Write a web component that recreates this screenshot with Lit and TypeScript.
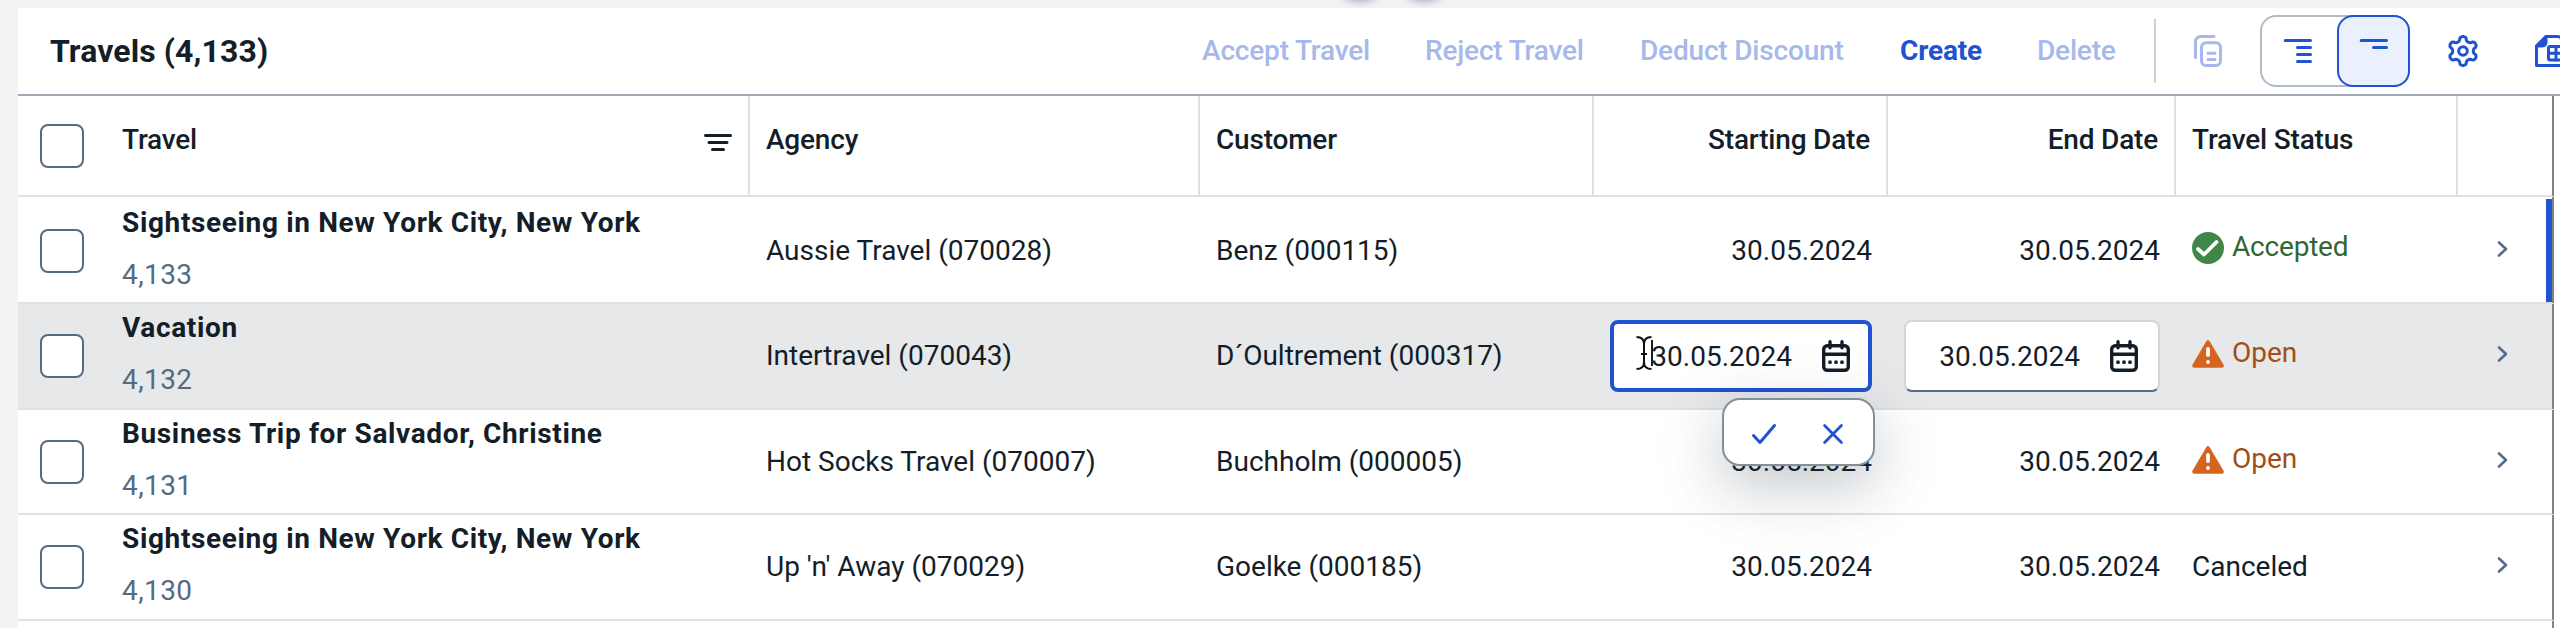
import { LitElement, html, svg, css, nothing } from "lit";
import { classMap } from "lit/directives/class-map.js";

type Status = "Accepted" | "Open" | "Canceled";

interface Travel {
  name: string;
  id: string;
  agency: string;
  customer: string;
  start: string;
  end: string;
  status: Status;
  editing?: boolean;
  modified?: boolean;
}

const TRAVELS: Travel[] = [
  { name: "Sightseeing in New York City, New York", id: "4,133", agency: "Aussie Travel (070028)", customer: "Benz (000115)", start: "30.05.2024", end: "30.05.2024", status: "Accepted", modified: true },
  { name: "Vacation", id: "4,132", agency: "Intertravel (070043)", customer: "D´Oultrement (000317)", start: "30.05.2024", end: "30.05.2024", status: "Open", editing: true },
  { name: "Business Trip for Salvador, Christine", id: "4,131", agency: "Hot Socks Travel (070007)", customer: "Buchholm (000005)", start: "30.05.2024", end: "30.05.2024", status: "Open" },
  { name: "Sightseeing in New York City, New York", id: "4,130", agency: "Up 'n' Away (070029)", customer: "Goelke (000185)", start: "30.05.2024", end: "30.05.2024", status: "Canceled" },
];

// Six-lobed outline of the settings gear, centred on 16,16.
const gearOutline = (() => {
  const points: string[] = [];
  for (let deg = 0; deg < 360; deg += 4) {
    const a = (deg * Math.PI) / 180;
    const wave = -Math.cos(6 * a);
    const r = 12.4 + 2.1 * wave;
    const bend = a + 0.05 * Math.sin(12 * a);
    points.push(`${(16 + r * Math.cos(bend)).toFixed(2)} ${(16 + r * Math.sin(bend)).toFixed(2)}`);
  }
  return `M${points.join("L")}Z`;
})();

const ICONS = {
  filter: svg`<path d="M5.500 8.500h25M9 15.500h18M12.500 22.500h11"/>`,
  copy: svg`<path d="M3.500 22.500V6.500a5 5 0 0 1 5-5H22"/><rect x="9.500" y="7.800" width="19" height="22.700" rx="4.500"/><path d="M16 18.300h7M16 24.500h7"/>`,
  all: svg`<path d="M3.200 5.500h25.300M15.500 12.500h13M15.500 19.500h13M15.500 26.500h13"/>`,
  some: svg`<path d="M3.200 5.500h25.300M15.500 12.500h13"/>`,
  gear: svg`<path d=${gearOutline}/><circle cx="16" cy="16" r="4.300"/>`,
  sheet: svg`<path d="M3.500 30.500V11L13 1.500H25a3.500 3.500 0 0 1 3.500 3.500M3.500 30.500H28"/><path class="solid" d="M3.500 11L13 1.500V7.500a3.500 3.500 0 0 1-3.500 3.500Z"/><rect x="15.500" y="11.500" width="16" height="13.500" rx="1.500"/><path d="M15.500 18.300h16M23 11.500v13.500"/>`,
  calendar: svg`<rect x="3.700" y="5.700" width="24.600" height="24.600" rx="3.500"/><path d="M3.700 14.300h24.600M10 1.700v6M22 1.700v6"/><path class="dots" d="M10 22.200h.01M16 22.200h.01M22 22.200h.01"/>`,
  check: svg`<path d="M5.500 17.500L12 24.500L26.500 7.500"/>`,
  close: svg`<path d="M7 7L25 25M25 7L7 25"/>`,
  chevron: svg`<path d="M12 9.500L19 16L12 22.500"/>`,
  success: svg`<circle class="solid plain" cx="16" cy="16" r="16"/><path class="mark" d="M6 17L12 22.500L24.500 10"/>`,
  warning: svg`<path class="solid" d="M16 4.200L29.800 27.800H2.200Z"/><path class="mark" d="M16 11v6M16 24h.01"/>`,
};

const icon = (name: keyof typeof ICONS, cls = "") =>
  html`<svg class="icon ${name} ${cls}" viewBox="0 0 32 32" width="32" height="32">${ICONS[name]}</svg>`;

class AppRoot extends LitElement {
  static styles = css`
    :host {
      display: block;
      box-sizing: border-box;
      position: relative;
      height: 628px;
      padding: 8px 0 0 18px;
      overflow: hidden;
      background: #f3f3f5;
      color: #131e29;
      font: 400 28px/32px Roboto, "Open Sans", sans-serif;
      white-space: nowrap;
    }
    *, *::before { box-sizing: border-box; }
    .glow {
      position: absolute;
      top: -44px;
      width: 38px;
      height: 44px;
      border-radius: 14px;
      background: #c9ccd5;
      box-shadow: 0 1px 9px rgba(80, 95, 125, 0.5);
    }
    .glow.one { left: 1341px; }
    .glow.two { left: 1405px; }
    .panel { position: relative; height: 620px; background: #fff; overflow: hidden; }

    .toolbar {
      display: grid;
      grid-template-columns: 1152px 223px 215px 260px 137px 117px 38px 68px 187px 86px 32px;
      align-items: center;
      height: 88px;
      padding-left: 32px;
      border-bottom: 2px solid #a0aab7;
      color: #2152d2;
    }
    .title {
      color: #131e29;
      font-size: 32px;
      font-weight: 700;
      letter-spacing: 0.1px;
    }
    .action { font-weight: 500; letter-spacing: -0.18px; }
    .action.strong { font-weight: 700; }
    .off { color: #a6b8ec; }
    .rule { width: 2px; height: 64px; background: #d1d1d1; }
    .segmented {
      display: flex;
      width: 150px;
      height: 72px;
      border: 2px solid #b4bac4;
      border-radius: 16px;
    }
    .segment { display: flex; align-items: center; width: 75px; padding-left: 20px; }
    .segment.selected {
      width: 73px;
      margin: -2px -2px -2px 0;
      padding-left: 19px;
      border: 2px solid #2152d2;
      border-radius: 16px;
      background: #eaf0fd;
    }

    .icon {
      display: block;
      flex: none;
      fill: none;
      stroke: currentColor;
      stroke-width: 3;
      stroke-linecap: round;
      stroke-linejoin: round;
    }
    .solid { fill: currentColor; }
    .plain { stroke: none; }
    .mark { stroke: #fff; stroke-width: 3.8; }
    .warning { stroke-width: 4; }
    .dots { stroke-width: 3.8; }
    .calendar { stroke-width: 3.4; }
    .chevron { stroke: #556b8a; stroke-width: 2.6; }

    .row {
      display: grid;
      position: relative;
      grid-template-columns: 88px 644px 450px 394px 294px 288px 282px 94px;
      width: 2536px;
      height: 106px;
      border-bottom: 2px solid #e1e1e1;
    }
    .row::before {
      content: "";
      position: absolute;
      top: 0;
      right: 0;
      bottom: -1px;
      width: 2px;
      background: #848484;
    }
    .first { height: 107px; padding-top: 2px; }
    .third { height: 105px; }
    .stub { height: 7px; border: 0; }
    .active { z-index: 1; background: linear-gradient(#e7e8ea, #e7e8ea) 0 0 / 2534px 100% no-repeat; }
    .header { height: 101px; font-weight: 500; letter-spacing: -0.2px; }
    .cell { padding: 36px 16px 0; }
    .header .cell { padding-top: 28px; border-right: 2px solid #e1e1e1; }
    .header .cell.select { padding: 28px 0 0 22px; border: 0; }
    .header .cell:last-child { border: 0; }
    .header .travel { display: flex; justify-content: space-between; padding-right: 16px; }
    .header .filter { margin-top: 3px; }
    .cell.select { padding: 30px 0 0 22px; }
    .box {
      width: 44px;
      height: 44px;
      border: 2px solid #556b82;
      border-radius: 8px;
      background: #fff;
    }
    .num { text-align: right; }
    .row:not(.header) .travel { padding-top: 8px; }
    .first .status { margin-top: -1px; }
    .name { font-weight: 700; letter-spacing: 0.64px; }
    .id { margin-top: 20px; color: #556b82; letter-spacing: 0.4px; }
    .status { display: flex; gap: 8px; }
    .status.Accepted, .status.Open { padding-top: 33px; }
    .status .icon { margin-top: 1px; }
    .Accepted .icon { color: #3f8648; }
    .Accepted { color: #316636; letter-spacing: -0.2px; }
    .Open .icon { color: #d6631e; }
    .Open { color: #a34e14; }
    .cell.nav { padding: 34px 0 0 29px; }
    .modified {
      position: absolute;
      top: 2px;
      right: 2px;
      bottom: 0;
      width: 6px;
      background: #2152d2;
    }

    .edit { position: relative; padding-top: 16px; }
    .input {
      display: flex;
      align-items: center;
      justify-content: flex-end;
      gap: 28px;
      height: 72px;
      padding: 0 18px 0 0;
      border: 2px solid #d2d6dc;
      border-bottom-color: #556b82;
      border-radius: 8px;
      background: #fff;
    }
    .input span { padding-top: 2px; }
    .input.focused { padding-right: 16px; border: 4px solid #2152d2; }
    .caret { position: absolute; left: 57px; top: 36px; width: 2px; height: 26px; background: #131e29; }
    .pointer { position: absolute; left: 41px; top: 31px; fill: none; stroke: #111; stroke-width: 2; }
    .confirm {
      display: flex;
      align-items: center;
      gap: 37px;
      position: absolute;
      left: 128px;
      top: 94px;
      width: 153px;
      height: 68px;
      padding: 4px 0 0 24px;
      border: 2px solid #848f9a;
      border-radius: 18px;
      background: #fff;
      color: #2152d2;
      box-shadow: 0 16px 80px rgba(34, 53, 72, 0.13), 0 20px 50px rgba(34, 53, 72, 0.17);
    }
    .confirm .icon { width: 32px; height: 34px; }
    .confirm .close { padding: 1px; }
  `;

  private input(value: string, focused = false) {
    return html`<div class=${classMap({ input: true, focused })}>
      <span>${value}</span>${icon("calendar")}
    </div>`;
  }

  private date(value: string, editing = false, focused = false) {
    if (!editing) return html`<div class="cell num">${value}</div>`;
    return html`<div class="cell num edit">
      ${this.input(value, focused)}
      ${focused
        ? html`<span class="caret"></span>
            <svg class="pointer" width="18" height="36" viewBox="0 0 18 36">
              <path d="M1.500 2Q9 2 9 9V27Q9 34 1.500 34M16.500 2Q9 2 9 9M16.500 34Q9 34 9 27M6 19h6" />
            </svg>
            <div class="confirm">${icon("check")}${icon("close")}</div>`
        : nothing}
    </div>`;
  }

  private row(t: Travel, index: number) {
    const classes = { row: true, first: index === 0, third: index === 2, active: !!t.editing };
    return html`<div class=${classMap(classes)}>
      <div class="cell select"><div class="box"></div></div>
      <div class="cell travel"><div class="name">${t.name}</div><div class="id">${t.id}</div></div>
      <div class="cell">${t.agency}</div>
      <div class="cell">${t.customer}</div>
      ${this.date(t.start, t.editing, true)} ${this.date(t.end, t.editing)}
      <div class="cell status ${t.status}">
        ${t.status === "Accepted" ? icon("success") : t.status === "Open" ? icon("warning") : nothing}
        <span>${t.status}</span>
      </div>
      <div class="cell nav">${icon("chevron")}</div>
      ${t.modified ? html`<span class="modified"></span>` : nothing}
    </div>`;
  }

  render() {
    return html`
      <span class="glow one"></span><span class="glow two"></span>
      <div class="panel">
        <div class="toolbar">
          <span class="title">Travels (4,133)</span>
          <span class="action off">Accept Travel</span>
          <span class="action off">Reject Travel</span>
          <span class="action off">Deduct Discount</span>
          <span class="action strong">Create</span>
          <span class="action off">Delete</span>
          <span class="rule"></span>
          ${icon("copy", "off")}
          <div class="segmented">
            <span class="segment">${icon("all")}</span>
            <span class="segment selected">${icon("some")}</span>
          </div>
          ${icon("gear")} ${icon("sheet")}
        </div>
        <div class="row header">
          <div class="cell select"><div class="box"></div></div>
          <div class="cell travel"><span>Travel</span>${icon("filter")}</div>
          <div class="cell">Agency</div>
          <div class="cell">Customer</div>
          <div class="cell num">Starting Date</div>
          <div class="cell num">End Date</div>
          <div class="cell">Travel Status</div>
          <div class="cell"></div>
        </div>
        ${TRAVELS.map((t, i) => this.row(t, i))}
        <div class="row stub"></div>
      </div>
    `;
  }
}

customElements.define("app-root", AppRoot);
